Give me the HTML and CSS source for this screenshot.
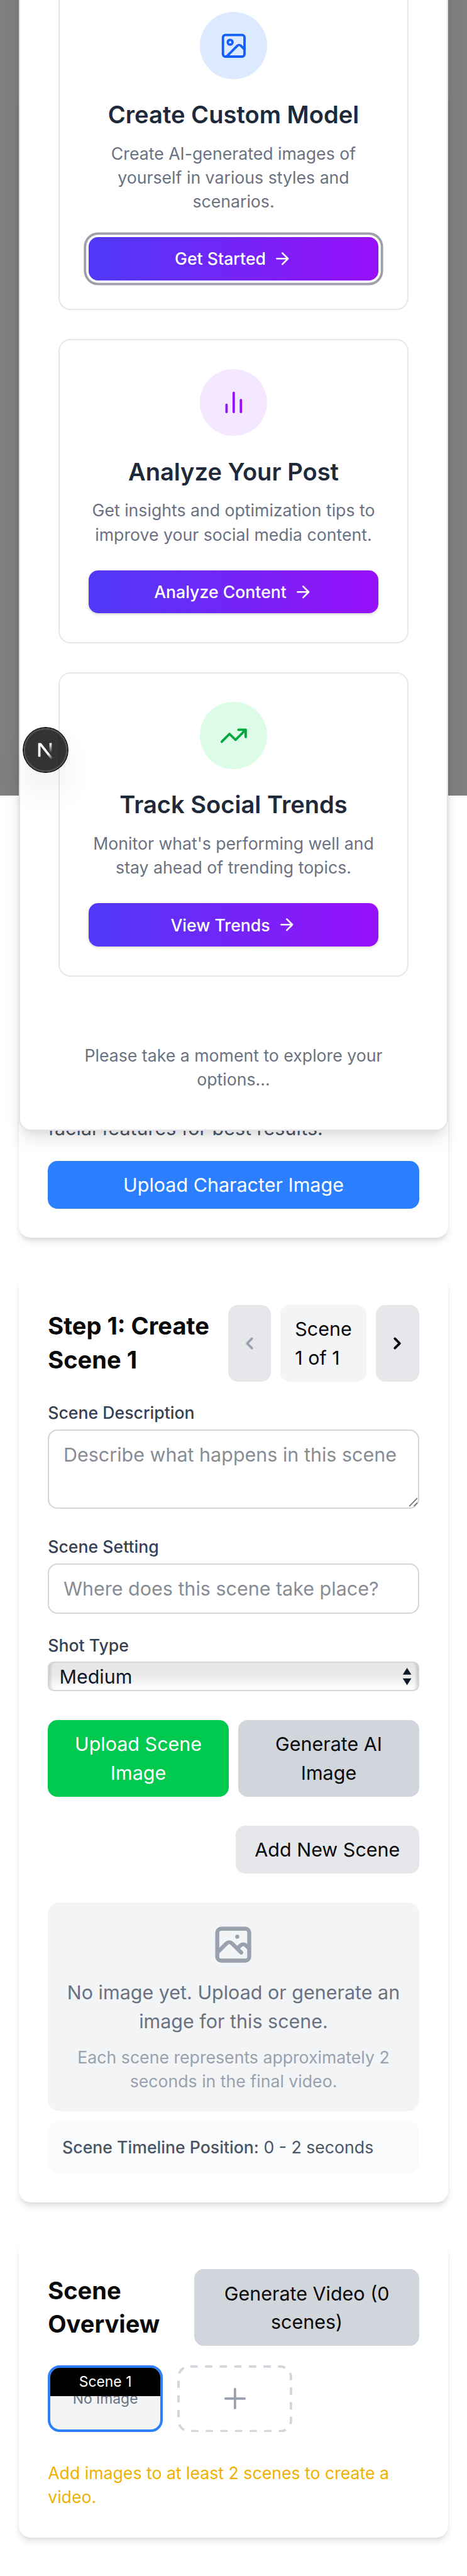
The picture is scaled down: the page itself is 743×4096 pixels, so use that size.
FILE: index.html
```html
<!DOCTYPE html>
<html lang="en">
<head>
<meta charset="utf-8">
<title>Scene Builder</title>
<link rel="stylesheet" href="styles.css">
</head>
<body>
<main class="page">
  <section class="panel panel-character">
    <p class="hint">facial features for best results.</p>
    <button class="btn btn-blue">Upload Character Image</button>
  </section>

  <section class="panel panel-step">
    <div class="panel-head">
      <h2>Step 1: Create<br>Scene 1</h2>
      <div class="pager">
        <button class="pager-btn disabled" aria-label="Previous"><svg viewBox="0 0 20 20"><path fill="currentColor" d="M12.707 5.293a1 1 0 010 1.414L9.414 10l3.293 3.293a1 1 0 01-1.414 1.414l-4-4a1 1 0 010-1.414l4-4a1 1 0 011.414 0z"/></svg></button>
        <span class="pager-label">Scene<br>1 of 1</span>
        <button class="pager-btn" aria-label="Next"><svg viewBox="0 0 20 20"><path fill="currentColor" d="M7.293 14.707a1 1 0 010-1.414L10.586 10 7.293 6.707a1 1 0 011.414-1.414l4 4a1 1 0 010 1.414l-4 4a1 1 0 01-1.414 0z"/></svg></button>
      </div>
    </div>

    <div class="field">
      <div class="label">Scene Description</div>
      <div class="input area">Describe what happens in this scene
        <svg class="grip" viewBox="0 0 8 8"><path d="M.6 7.4 7.3.6M4.4 7.4 7.3 4.4" fill="none" stroke="#6b6b6b" stroke-width=".8"/></svg>
      </div>
    </div>
    <div class="field field-setting">
      <div class="label">Scene Setting</div>
      <div class="input">Where does this scene take place?</div>
    </div>
    <div class="field">
      <div class="label">Shot Type</div>
      <div class="select"><span>Medium</span>
        <svg viewBox="0 0 8 15"><path fill="#0f172a" d="M4 0 7.6 5.6H.4zM4 14.4.4 8.8h7.2z"/></svg>
      </div>
    </div>

    <div class="actions">
      <button class="btn btn-green">Upload Scene<br>Image</button>
      <button class="btn btn-gray">Generate AI<br>Image</button>
    </div>
    <div class="actions-end">
      <button class="btn btn-light">Add New Scene</button>
    </div>

    <div class="preview">
      <svg class="preview-icon" viewBox="0 0 24 24"><path fill="none" stroke="currentColor" stroke-width="2" stroke-linecap="round" stroke-linejoin="round" d="M4 16l4.586-4.586a2 2 0 012.828 0L16 16m-2-2l1.586-1.586a2 2 0 012.828 0L20 14m-6-6h.01M6 20h12a2 2 0 002-2V6a2 2 0 00-2-2H6a2 2 0 00-2 2v12a2 2 0 002 2z"/></svg>
      <p class="preview-title">No image yet. Upload or generate an<br>image for this scene.</p>
      <p class="preview-note">Each scene represents approximately 2<br>seconds in the final video.</p>
    </div>
    <div class="timeline"><b>Scene Timeline Position:</b> 0 - 2 seconds</div>
  </section>

  <section class="panel panel-overview">
    <div class="panel-head">
      <h2>Scene<br>Overview</h2>
      <button class="btn btn-gray btn-generate">Generate Video (0<br>scenes)</button>
    </div>
    <div class="thumbs">
      <div class="thumb"><span class="thumb-empty">No Image</span><span class="thumb-tag">Scene 1</span></div>
      <div class="thumb-add">
        <svg class="dash" viewBox="0 0 96 56"><rect x="1" y="1" width="94" height="54" rx="9" fill="none" stroke="#d1d5dc" stroke-width="2" stroke-dasharray="6.1 6.1" stroke-dashoffset="-1"/></svg>
        <svg class="plus" viewBox="0 0 24 24"><path fill="none" stroke="currentColor" stroke-width="2" stroke-linecap="round" d="M12 4v16m8-8H4"/></svg>
      </div>
    </div>
    <p class="warning">Add images to at least 2 scenes to create a<br>video.</p>
  </section>
</main>

<div class="overlay"></div>

<div class="modal">
  <article class="card">
    <div class="badge badge-blue"><svg viewBox="0 0 24 24"><rect x="3" y="3" width="18" height="18" rx="2"/><circle cx="9" cy="9" r="2"/><path d="m21 15-3.086-3.086a2 2 0 0 0-2.828 0L6 21"/></svg></div>
    <h3>Create Custom Model</h3>
    <p>Create AI-generated images of<br>yourself in various styles and<br>scenarios.</p>
    <button class="cta focused">Get Started<svg viewBox="0 0 24 24"><path d="M5 12h14M12 5l7 7-7 7"/></svg></button>
  </article>
  <article class="card">
    <div class="badge badge-purple"><svg viewBox="0 0 24 24"><path d="M18 20V10M12 20V4M6 20v-6"/></svg></div>
    <h3>Analyze Your Post</h3>
    <p>Get insights and optimization tips to<br>improve your social media content.</p>
    <button class="cta">Analyze Content<svg viewBox="0 0 24 24"><path d="M5 12h14M12 5l7 7-7 7"/></svg></button>
  </article>
  <article class="card">
    <div class="badge badge-green"><svg viewBox="0 0 24 24"><path d="M16 7h6v6M22 7l-8.5 8.5-5-5L2 17"/></svg></div>
    <h3>Track Social Trends</h3>
    <p>Monitor what's performing well and<br>stay ahead of trending topics.</p>
    <button class="cta">View Trends<svg viewBox="0 0 24 24"><path d="M5 12h14M12 5l7 7-7 7"/></svg></button>
  </article>
  <p class="modal-note">Please take a moment to explore your<br>options...</p>
</div>

<div class="devtools">
  <svg viewBox="0 0 36 36">
    <defs>
      <linearGradient id="fadeDiag" gradientUnits="userSpaceOnUse" x1="20.2" y1="21.4" x2="23.6" y2="25.8"><stop stop-color="#fff"/><stop offset="1" stop-color="#fff" stop-opacity="0"/></linearGradient>
      <linearGradient id="fadeStem" gradientUnits="userSpaceOnUse" x1="22" y1="12.3" x2="22" y2="20.6"><stop stop-color="#fff"/><stop offset="1" stop-color="#fff" stop-opacity="0"/></linearGradient>
      <clipPath id="logoTop"><rect y="12.3" width="36" height="24"/></clipPath>
    </defs>
    <g clip-path="url(#logoTop)" fill="none" stroke-width="1.95">
      <path stroke="url(#fadeDiag)" d="M23.5 25.5 12.9 12V23.7"/>
      <path stroke="url(#fadeStem)" d="M22.3 12V21"/>
    </g>
  </svg>
</div>
</body>
</html>
```

FILE: styles.css
```css
/* 1rem equals ten layout units of the 390-unit wide screen */
html { font-size: 19.0513px; }
* { box-sizing: border-box; margin: 0; padding: 0; }
body {
  position: relative;
  width: 39rem;
  height: 4096px;
  overflow: hidden;
  background: #fff;
  color: #0a0a0a;
  font-family: Inter, "Liberation Sans", sans-serif;
  font-size: 1.6rem;
  line-height: 2.4rem;
}
button { border: 0; font: inherit; color: inherit; background: none; }
svg { display: block; }

.page {
  display: flex;
  flex-direction: column;
  gap: 3.2rem;
  padding: 7.3rem 1.6rem 0;
}
.panel {
  padding: 2.4rem;
  border-radius: 1rem;
  background: #fff;
  box-shadow: 0 .4rem .6rem -.1rem rgba(0,0,0,.1), 0 .2rem .4rem -.2rem rgba(0,0,0,.1);
}
.panel-character {
  display: flex;
  flex-direction: column;
  justify-content: flex-end;
  gap: 1.55rem;
  height: 96rem;
}
.hint { color: #4a5565; }

.btn { min-height: 4rem; padding: .8rem 1.6rem; border-radius: .8rem; text-align: center; white-space: nowrap; }
.btn-blue { background: #2b7fff; color: #fff; }
.btn-green { background: #00c950; color: #fff; }
.btn-gray { background: #d1d5dc; }
.btn-light { background: #e5e7eb; }

.panel-head { display: flex; justify-content: space-between; align-items: center; margin-bottom: 1.6rem; }
h2 { font-size: 2rem; line-height: 2.8rem; font-weight: 700; white-space: nowrap; }
.pager { display: flex; gap: .8rem; height: 6.4rem; }
.pager-btn { display: flex; align-items: center; justify-content: center; width: 3.6rem; border-radius: .8rem; background: #e5e7eb; }
.pager-btn svg { width: 2rem; height: 2rem; }
.pager-btn.disabled { color: #99a1af; }
.pager-label { width: 7.17rem; padding: .8rem 1.2rem; border-radius: .8rem; background: #f3f4f6; white-space: nowrap; }

.field { margin-bottom: 1.6rem; }
.label { margin-bottom: .4rem; font-size: 1.4rem; line-height: 2rem; font-weight: 500; color: #364153; }
.input {
  position: relative;
  height: 4.2rem;
  padding: calc(.9rem - 2px) calc(1.3rem - 2px);
  border: 2px solid #d1d5dc;
  border-radius: .8rem;
  color: #878c95;
  white-space: nowrap;
}
.area { height: 6.6rem; margin-bottom: 2.2rem; }
.grip { position: absolute; right: 0; bottom: 0; width: .8rem; height: .8rem; }
.select {
  display: flex;
  align-items: center;
  justify-content: space-between;
  height: 2.467rem;
  padding: 0 .5rem 0 .85rem;
  border: 2px solid #d1d5dc;
  border-radius: .5rem;
  color: #0f172a;
  background: linear-gradient(#e5e5e5, #ebebeb 50%, #fff);
  box-shadow: inset .4rem 0 .3rem -.3rem rgba(0,0,0,.18), inset -.4rem 0 .3rem -.3rem rgba(0,0,0,.18);
}
.select svg { width: .8rem; height: 1.5rem; }

.actions { display: grid; grid-template-columns: 1fr 1fr; gap: .8rem; margin-top: 2.4rem; }
.actions-end { display: flex; justify-content: flex-end; margin: 2.4rem 0; }

.preview {
  display: flex;
  flex-direction: column;
  align-items: center;
  justify-content: center;
  height: 17.44rem;
  border-radius: 1rem;
  background: #f3f4f6;
  text-align: center;
  white-space: nowrap;
}
.preview-icon { width: 4rem; height: 4rem; color: #99a1af; }
.preview-title { margin: .8rem 0; color: #6a7282; }
.preview-note { font-size: 1.4rem; line-height: 2rem; color: #99a1af; }
.timeline { margin-top: .8rem; padding: 1.2rem; border-radius: 1rem; background: #f9fafb; font-size: 1.4rem; line-height: 2rem; color: #4a5565; }
.timeline b { font-weight: 500; }

.btn-generate { width: 18.76rem; }
.thumbs { display: flex; gap: 1.2rem; }
.thumb {
  position: relative;
  display: flex;
  align-items: center;
  justify-content: center;
  width: 9.6rem;
  height: 5.6rem;
  border: 4px solid #2b7fff;
  border-radius: 1rem;
  overflow: hidden;
  background: #f3f4f6;
  font-size: 1.2rem;
  line-height: 1.6rem;
}
.thumb-empty { color: #6a7282; }
.thumb-tag { position: absolute; top: 0; left: 0; right: 0; padding: .4rem; background: #000; color: #fff; text-align: center; }
.thumb-add { position: relative; display: flex; align-items: center; justify-content: center; width: 9.6rem; height: 5.6rem; color: #99a1af; }
.dash { position: absolute; inset: 0; width: 100%; height: 100%; }
.plus { width: 2.4rem; height: 2.4rem; }
.warning { margin-top: 2.4rem; font-size: 1.4rem; line-height: 2rem; color: #f0b100; }

.overlay { position: absolute; top: 0; left: 0; right: 0; height: 66.4rem; background: rgba(0,0,0,.5); }

.modal {
  position: absolute;
  top: -4.8rem;
  left: 1.6rem;
  display: flex;
  flex-direction: column;
  gap: 2.4rem;
  width: 35.8rem;
  height: 99.2rem;
  padding: calc(3.3rem - 2px);
  border: 2px solid #e4e4e7;
  border-radius: 1rem;
  background: #fff;
  box-shadow: 0 1rem 1.5rem -.3rem rgba(0,0,0,.1), 0 .4rem .6rem -.4rem rgba(0,0,0,.1);
  font-size: 1.4rem;
  line-height: 2rem;
  text-align: center;
  color: #6a7282;
  white-space: nowrap;
}
.card {
  display: flex;
  flex-direction: column;
  align-items: center;
  padding: calc(2.5rem - 2px);
  border: 2px solid #e5e7eb;
  border-radius: 1rem;
}
.badge { display: flex; align-items: center; justify-content: center; width: 5.6rem; height: 5.6rem; border-radius: 50%; }
.badge svg { width: 2.4rem; height: 2.4rem; }
.badge svg, .cta svg { fill: none; stroke: currentColor; stroke-width: 2; stroke-linecap: round; stroke-linejoin: round; }
.badge-blue { background: #dbeafe; color: #155dfc; }
.badge-purple { background: #f3e8ff; color: #9810fa; }
.badge-green { background: #dcfce7; color: #00a63e; }
h3 { margin: 1.6rem 0 .8rem; font-size: 2rem; line-height: 2.8rem; font-weight: 600; color: #1e2939; }
.cta {
  display: flex;
  align-items: center;
  justify-content: center;
  gap: .6rem;
  width: 100%;
  height: 3.6rem;
  margin-top: 2rem;
  border-radius: .8rem;
  background: linear-gradient(90deg, #4f39f6, #9810fa);
  color: #fff;
  font-weight: 500;
  box-shadow: 0 .1rem .3rem rgba(0,0,0,.1), 0 .1rem .2rem -.1rem rgba(0,0,0,.1);
}
.cta.focused { box-shadow: 0 0 0 .2rem #fff, 0 0 0 .4rem #9f9fa9; }
.cta svg { width: 1.6rem; height: 1.6rem; }
.modal-note { margin-top: 3.2rem; }

.devtools {
  position: absolute;
  top: 60.8rem;
  left: 2rem;
  width: 3.6rem;
  height: 3.6rem;
  border-radius: 50%;
  background: rgba(0,0,0,.8);
  box-shadow: 0 0 0 .1rem #171717, inset 0 0 0 .1rem rgba(255,255,255,.14), 0 1.6rem 3.2rem -.8rem rgba(0,0,0,.24);
}
.devtools svg { width: 3.6rem; height: 3.6rem; }
```
